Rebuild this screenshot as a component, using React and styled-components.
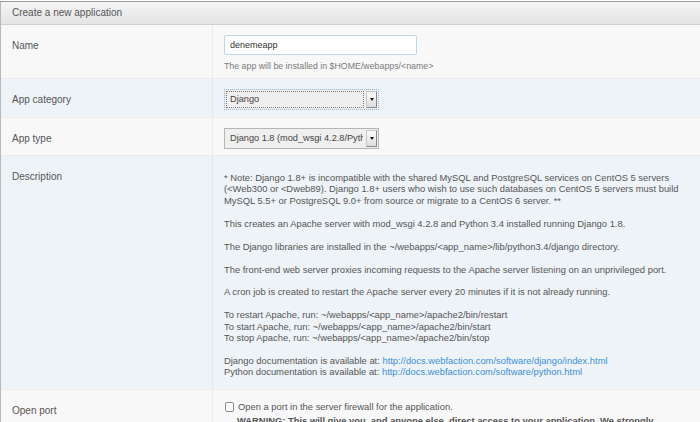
import React, { useState } from 'react';
import styled, { createGlobalStyle } from 'styled-components';

const GlobalStyle = createGlobalStyle`
  html, body {
    margin: 0;
    padding: 0;
    background: #fff;
    overflow: hidden;
  }
  body {
    font-family: "Liberation Sans", Arial, sans-serif;
    color: #555;
  }
`;

const Panel = styled.div`
  margin-top: 1px;
  border-top: 1px solid #9a9a9a;
  border-left: 1px solid #b8b8b8;
  background: #f8f8f8;
`;

const Header = styled.div`
  height: 22px;
  line-height: 22px;
  padding-left: 11px;
  font-size: 10px;
  color: #555;
  background: linear-gradient(#f5f5f5, #e4e4e4);
  border-bottom: 1px solid #d0d0d0;
`;

const Row = styled.div`
  display: grid;
  grid-template-columns: 211px 1fr;
  background: ${p => (p.$alt ? '#eef3f8' : '#f8f8f8')};
  border-top: ${p => (p.$first ? 'none' : '1px solid #e8ecf0')};
`;

const Label = styled.div`
  padding: 10px 11px 0;
  font-size: 10px;
  line-height: 21px;
  color: #555;
`;

const Value = styled.div`
  padding: ${p => p.$pad || '10px 16px 7px 11px'};
  border-left: 1px solid ${p => (p.$alt ? '#e3e9ef' : '#ececec')};
  font-size: 9.4px;
  color: #555;
`;

const TextInput = styled.input`
  box-sizing: border-box;
  display: block;
  width: 193px;
  height: 20px;
  padding: 0 5px;
  border: 1px solid #bcd6ee;
  border-radius: 2px;
  background: #fff;
  font-family: "Liberation Sans", Arial, sans-serif;
  font-size: 9px;
  color: #333;
  outline: none;
`;

const Help = styled.div`
  margin-top: 5px;
  font-size: 8.8px;
  line-height: 12px;
  color: #7a7a7a;
`;

const Select = styled.div`
  box-sizing: border-box;
  display: flex;
  width: ${p => p.$width}px;
  height: 21px;
  padding: 1px;
  border: 1px ${p => (p.$focus ? 'dotted #8fb6dc' : 'solid #b5b5b5')};
  background: #efefef;
  font-size: 9.2px;
  color: #444;
`;

const SelectText = styled.div`
  flex: 1;
  min-width: 0;
  overflow: hidden;
  white-space: nowrap;
  line-height: 15px;
  padding-left: 3px;
  border: 1px ${p => (p.$focus ? 'dotted #777' : 'solid transparent')};
  margin-right: 2px;
`;

const Arrow = styled.div`
  box-sizing: border-box;
  width: 11px;
  border: 1px solid #c8c8c8;
  border-right-color: #8a8a8a;
  border-bottom-color: #8a8a8a;
  background: linear-gradient(#fbfbfb, #dcdcdc);
  display: flex;
  align-items: center;
  justify-content: center;

  &::after {
    content: '';
    border-left: 2.5px solid transparent;
    border-right: 2.5px solid transparent;
    border-top: 3px solid #111;
  }
`;

const Desc = styled.div`
  margin-top: 6px;
  font-size: 9.4px;
  line-height: 11.4px;
  color: #555;

  p {
    margin: 0 0 11.5px;
  }
  p:last-child {
    margin-bottom: 0;
  }
`;

const Link = styled.a`
  color: #3b8fd9;
  text-decoration: none;
`;

const CheckLine = styled.label`
  display: flex;
  align-items: center;
  gap: 4px;
  margin-top: 1px;
  font-size: 9.4px;
  line-height: 12px;
  color: #555;
`;

const Box = styled.input`
  appearance: none;
  box-sizing: border-box;
  width: 9px;
  height: 10px;
  margin: 0 0 0 1px;
  border: 1px solid #8c8c8c;
  border-radius: 2px;
  background: #fff;
`;

const Warning = styled.div`
  margin: 2px 0 0 13px;
  font-size: 9.4px;
  line-height: 12px;
  font-weight: bold;
  color: #555;
`;

function SelectField({ width, value, focus }) {
  return (
    <Select $width={width} $focus={focus}>
      <SelectText $focus={focus}>{value}</SelectText>
      <Arrow />
    </Select>
  );
}

export default function App() {
  const [name, setName] = useState('denemeapp');
  const [openPort, setOpenPort] = useState(false);

  return (
    <>
      <GlobalStyle />
      <Panel>
        <Header>Create a new application</Header>

        <Row $first>
          <Label>Name</Label>
          <Value $pad="10px 16px 6px 11px">
            <TextInput value={name} onChange={e => setName(e.target.value)} />
            <Help>The app will be installed in $HOME/webapps/&lt;name&gt;</Help>
          </Value>
        </Row>

        <Row $alt>
          <Label>App category</Label>
          <Value $alt>
            <SelectField width={155} value="Django" focus />
          </Value>
        </Row>

        <Row>
          <Label>App type</Label>
          <Value $pad="10px 16px 6px 11px">
            <SelectField width={155} value="Django 1.8 (mod_wsgi 4.2.8/Python 3.4)" />
          </Value>
        </Row>

        <Row $alt>
          <Label>Description</Label>
          <Value $alt $pad="10px 16px 11px 11px">
            <Desc>
              <p>
                * Note: Django 1.8+ is incompatible with the shared MySQL and PostgreSQL services on CentOS 5 servers
                (&lt;Web300 or &lt;Dweb89). Django 1.8+ users who wish to use such databases on CentOS 5 servers must build
                MySQL 5.5+ or PostgreSQL 9.0+ from source or migrate to a CentOS 6 server. **
              </p>
              <p>This creates an Apache server with mod_wsgi 4.2.8 and Python 3.4 installed running Django 1.8.</p>
              <p>The Django libraries are installed in the ~/webapps/&lt;app_name&gt;/lib/python3.4/django directory.</p>
              <p>The front-end web server proxies incoming requests to the Apache server listening on an unprivileged port.</p>
              <p>A cron job is created to restart the Apache server every 20 minutes if it is not already running.</p>
              <p>
                To restart Apache, run: ~/webapps/&lt;app_name&gt;/apache2/bin/restart<br />
                To start Apache, run: ~/webapps/&lt;app_name&gt;/apache2/bin/start<br />
                To stop Apache, run: ~/webapps/&lt;app_name&gt;/apache2/bin/stop
              </p>
              <p>
                Django documentation is available at:{' '}
                <Link href="#">http://docs.webfaction.com/software/django/index.html</Link>
                <br />
                Python documentation is available at:{' '}
                <Link href="#">http://docs.webfaction.com/software/python.html</Link>
              </p>
            </Desc>
          </Value>
        </Row>

        <Row>
          <Label>Open port</Label>
          <Value>
            <CheckLine>
              <Box type="checkbox" checked={openPort} onChange={e => setOpenPort(e.target.checked)} />
              Open a port in the server firewall for the application.
            </CheckLine>
            <Warning>
              WARNING: This will give you, and anyone else, direct access to your application. We strongly
              recommend that you do not open a port unless you need it.
            </Warning>
          </Value>
        </Row>
      </Panel>
    </>
  );
}
